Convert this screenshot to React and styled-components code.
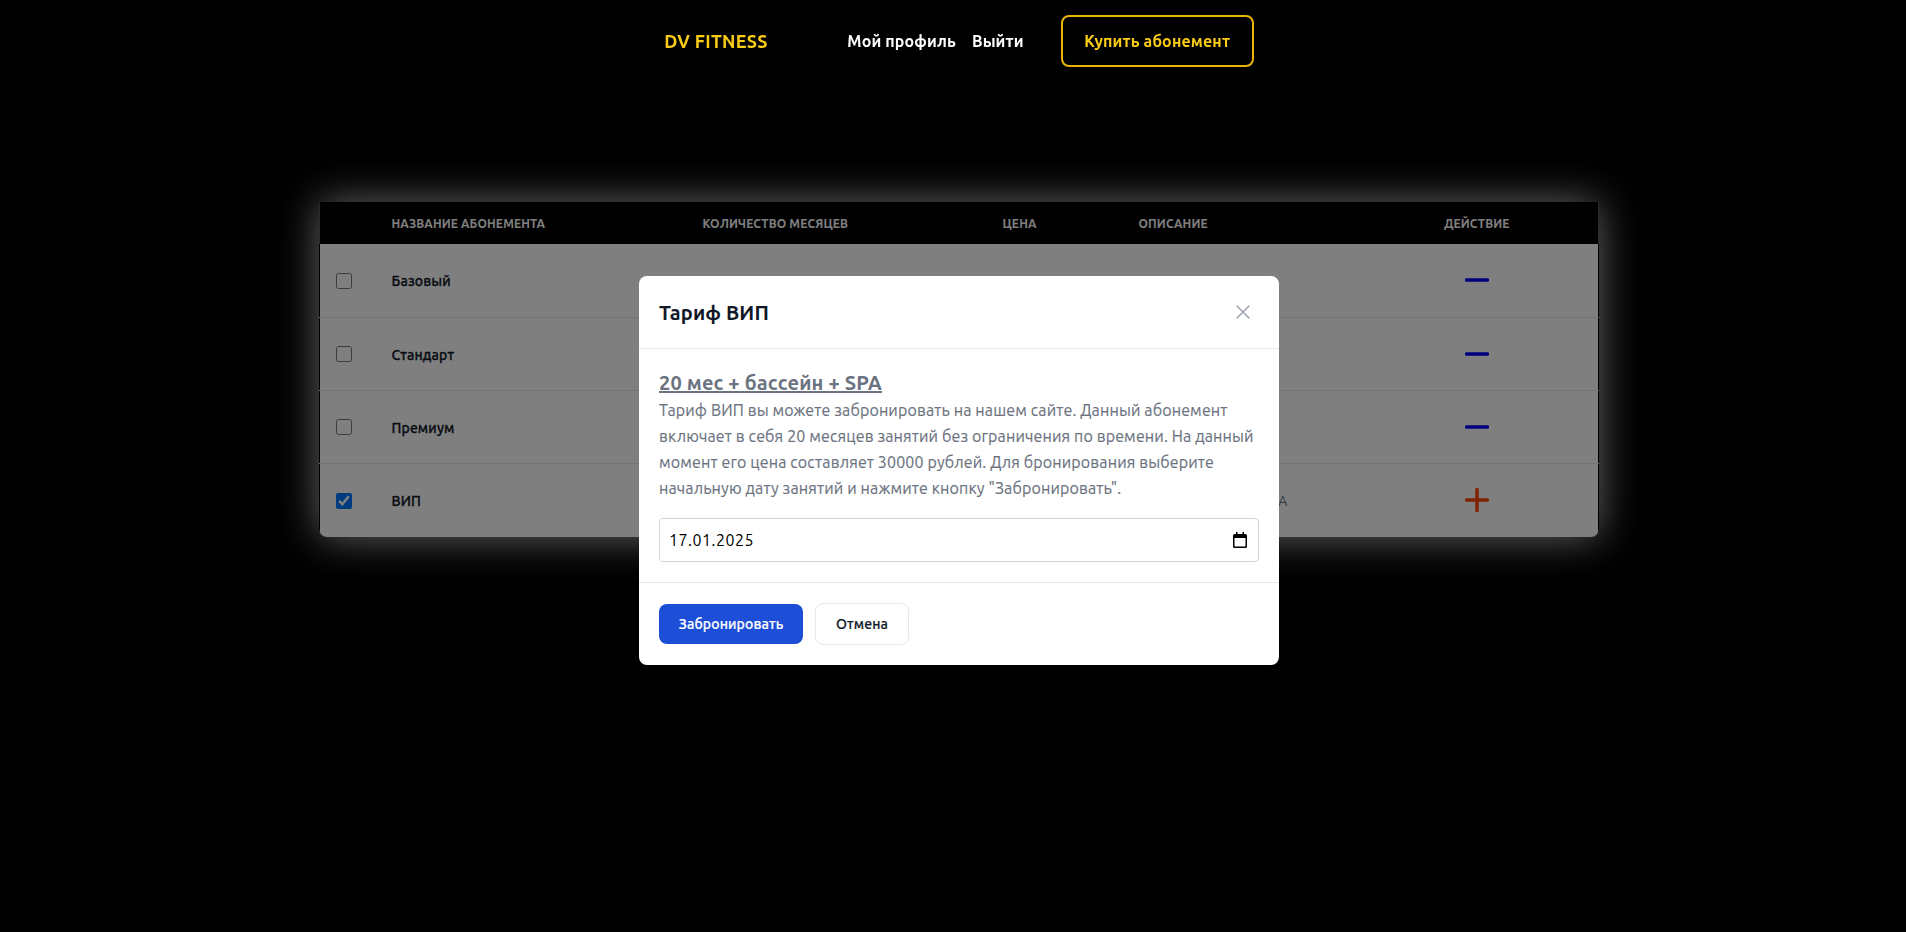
import React from 'react';
import styled, { createGlobalStyle } from 'styled-components';

const GlobalStyle = createGlobalStyle`
  html, body {
    margin: 0;
    padding: 0;
    background: #000;
    font-family: Ubuntu, "Noto Sans", "Open Sans", sans-serif;
    letter-spacing: 0.13px;
  }
  * { box-sizing: border-box; }
  button, input { letter-spacing: inherit; }
`;

const Page = styled.div`
  min-height: 932px;
  padding-left: 12px;
  background: #000;
`;

const Nav = styled.nav`
  position: relative;
  z-index: 60;
  display: flex;
  justify-content: center;
  align-items: center;
  height: 82px;
`;

const Logo = styled.a`
  width: 183px;
  color: #facc15;
  font-size: 18px;
  font-weight: 700;
  letter-spacing: 0.3px;
`;

const NavLinks = styled.div`
  display: flex;
  gap: 16px;
  margin-right: 37px;
`;

const NavLink = styled.a`
  color: #fff;
  font-size: 16px;
  font-weight: 700;
`;

const BuyButton = styled.button`
  width: 193px;
  height: 52px;
  margin-top: -1px;
  background: transparent;
  border: 2px solid #eab308;
  border-radius: 8px;
  color: #facc15;
  font: inherit;
  font-size: 16px;
  font-weight: 700;
`;

const TableGlow = styled.div`
  width: 1280px;
  margin: 120px auto 0;
  border-radius: 0 0 8px 8px;
  box-shadow: 0 0 40px rgba(255, 255, 255, 0.8);
`;

const TableCard = styled.div`
  border-radius: 0 0 8px 8px;
  overflow: hidden;
`;

const Table = styled.table`
  width: 100%;
  border-collapse: collapse;
  table-layout: fixed;
  background: #fff;
  font-size: 14px;
`;

const HeadRow = styled.tr`
  height: 42px;
  background: #000;
  border-left: 1px solid #555;
  border-right: 1px solid #555;
`;

const Th = styled.th`
  padding: 0 0 0 ${p => (p.$center ? 0 : 24)}px;
  color: #fff;
  font-size: 12px;
  font-weight: 700;
  text-transform: uppercase;
  text-align: ${p => (p.$center ? 'center' : 'left')};
`;

const Row = styled.tr`
  height: 73px;
  border-left: 1px solid #000;
  border-right: 1px solid #000;
  border-bottom: 1px solid #e5e7eb;
  &:last-child { border-bottom: 0; height: 74px; }
`;

const Td = styled.td`
  padding: 2px 0 0 24px;
  color: #6b7280;
  letter-spacing: 0;
`;

const NameCell = styled(Td)`
  color: #111827;
  font-weight: 500;
  letter-spacing: 0.13px;
  -webkit-text-stroke: 0.3px #111827;
`;

const CheckCell = styled.td`
  padding: 1px 0 0 16px;
`;

const Check = styled.input`
  display: block;
  width: 16px;
  height: 16px;
  margin: 0;
`;

const ActionCell = styled.td`
  text-align: center;
`;

const ActionIcon = styled.svg`
  display: block;
  margin: 0 auto;
`;

const Overlay = styled.div`
  position: fixed;
  inset: 0;
  z-index: 50;
  padding: 276px 0 0 12px;
  background: rgba(0, 0, 0, 0.5);
`;

const Modal = styled.div`
  width: 640px;
  margin: 0 auto;
  background: #fff;
  border-radius: 8px;
`;

const ModalHeader = styled.div`
  display: flex;
  justify-content: space-between;
  align-items: center;
  height: 73px;
  padding: 0 20px;
  border-bottom: 1px solid #e5e7eb;
`;

const ModalTitle = styled.h3`
  margin: 0;
  color: #111827;
  font-size: 20px;
  font-weight: 700;
`;

const CloseButton = styled.button`
  display: flex;
  padding: 0 9px 0 0;
  background: none;
  border: 0;
  color: #9ca3af;
`;

const ModalBody = styled.div`
  display: flex;
  flex-direction: column;
  gap: 17px;
  padding: 20px;
`;

const Subtitle = styled.div`
  color: #6b7280;
  font-size: 20px;
  font-weight: 700;
  line-height: 28px;
  text-decoration: underline;
`;

const Text = styled.p`
  margin: 0;
  color: #6b7280;
  font-size: 16px;
  line-height: 26px;
  -webkit-text-stroke: 0.15px #6b7280;
`;

const DateField = styled.div`
  display: flex;
  align-items: center;
  justify-content: space-between;
  height: 44px;
  padding: 0 11px 0 9px;
  border: 1px solid #d1d5db;
  border-radius: 4px;
`;

const DateValue = styled.input`
  border: 0;
  outline: 0;
  padding: 0;
  color: #000;
  font: inherit;
  font-size: 16px;
  letter-spacing: 0.5px;
`;

const ModalFooter = styled.div`
  display: flex;
  align-items: center;
  gap: 12px;
  padding: 20px;
  border-top: 1px solid #e5e7eb;
`;

const PrimaryButton = styled.button`
  width: 144px;
  height: 40px;
  background: #1d4ed8;
  border: 0;
  border-radius: 8px;
  color: #fff;
  font: inherit;
  font-size: 14px;
  font-weight: 500;
  -webkit-text-stroke: 0.2px #fff;
`;

const SecondaryButton = styled.button`
  width: 94px;
  height: 42px;
  background: #fff;
  border: 1px solid #e5e7eb;
  border-radius: 8px;
  color: #111827;
  font: inherit;
  font-size: 14px;
  font-weight: 500;
  -webkit-text-stroke: 0.2px #111827;
`;

const plans = [
  { name: 'Базовый' },
  { name: 'Стандарт' },
  { name: 'Премиум' },
  { name: 'ВИП', months: 20, price: 30000, description: '20 мес + бассейн + SPA', active: true },
];

function Minus() {
  return (
    <ActionIcon width="24" height="24" viewBox="0 0 24 24">
      <line x1="1.5" y1="12" x2="22.5" y2="12" stroke="#0000ff" strokeWidth="3.5" strokeLinecap="round" />
    </ActionIcon>
  );
}

function Plus() {
  return (
    <ActionIcon width="24" height="24" viewBox="0 0 24 24">
      <path d="M12 1.5v21M1.500 12h21" stroke="#ff4500" strokeWidth="3.5" strokeLinecap="round" fill="none" />
    </ActionIcon>
  );
}

export default function App() {
  return (
    <Page>
      <GlobalStyle />
      <Nav>
        <Logo>DV FITNESS</Logo>
        <NavLinks>
          <NavLink>Мой профиль</NavLink>
          <NavLink>Выйти</NavLink>
        </NavLinks>
        <BuyButton>Купить абонемент</BuyButton>
      </Nav>

      <TableGlow>
        <TableCard>
          <Table>
            <colgroup>
              <col style={{ width: 48 }} />
              <col style={{ width: 311 }} />
              <col style={{ width: 300 }} />
              <col style={{ width: 136 }} />
              <col style={{ width: 241 }} />
              <col />
            </colgroup>
            <thead>
              <HeadRow>
                <Th />
                <Th>Название абонемента</Th>
                <Th>Количество месяцев</Th>
                <Th>Цена</Th>
                <Th>Описание</Th>
                <Th $center>Действие</Th>
              </HeadRow>
            </thead>
            <tbody>
              {plans.map(plan => (
                <Row key={plan.name}>
                  <CheckCell>
                    <Check type="checkbox" defaultChecked={plan.active} />
                  </CheckCell>
                  <NameCell>{plan.name}</NameCell>
                  <Td>{plan.months}</Td>
                  <Td>{plan.price}</Td>
                  <Td>{plan.description}</Td>
                  <ActionCell>{plan.active ? <Plus /> : <Minus />}</ActionCell>
                </Row>
              ))}
            </tbody>
          </Table>
        </TableCard>
      </TableGlow>

      <Overlay>
        <Modal>
          <ModalHeader>
            <ModalTitle>Тариф ВИП</ModalTitle>
            <CloseButton>
              <svg width="14" height="14" viewBox="0 0 14 14" fill="none">
                <path d="M1 1l12 12M13 1L1 13" stroke="currentColor" strokeWidth="1.5" strokeLinecap="round" />
              </svg>
            </CloseButton>
          </ModalHeader>
          <ModalBody>
            <div>
              <Subtitle>20 мес + бассейн + SPA</Subtitle>
              <Text>
                Тариф ВИП вы можете забронировать на нашем сайте. Данный абонемент включает в себя 20 месяцев занятий без
                ограничения по времени. На данный момент его цена составляет 30000 рублей. Для бронирования выберите
                начальную дату занятий и нажмите кнопку "Забронировать".
              </Text>
            </div>
            <DateField>
              <DateValue readOnly value="17.01.2025" />
              <svg width="14" height="16" viewBox="0 0 14 16">
                <path
                  d="M3 0h1.5v2h5V0H11v2h1.5A1.5 1.5 0 0 1 14 3.500v11a1.500 1.500 0 0 1-1.500 1.500h-11A1.500 1.500 0 0 1 0 14.500v-11A1.500 1.500 0 0 1 1.500 2H3zM1.500 6v8.500h11V6z"
                  fill="#000"
                />
              </svg>
            </DateField>
          </ModalBody>
          <ModalFooter>
            <PrimaryButton>Забронировать</PrimaryButton>
            <SecondaryButton>Отмена</SecondaryButton>
          </ModalFooter>
        </Modal>
      </Overlay>
    </Page>
  );
}
